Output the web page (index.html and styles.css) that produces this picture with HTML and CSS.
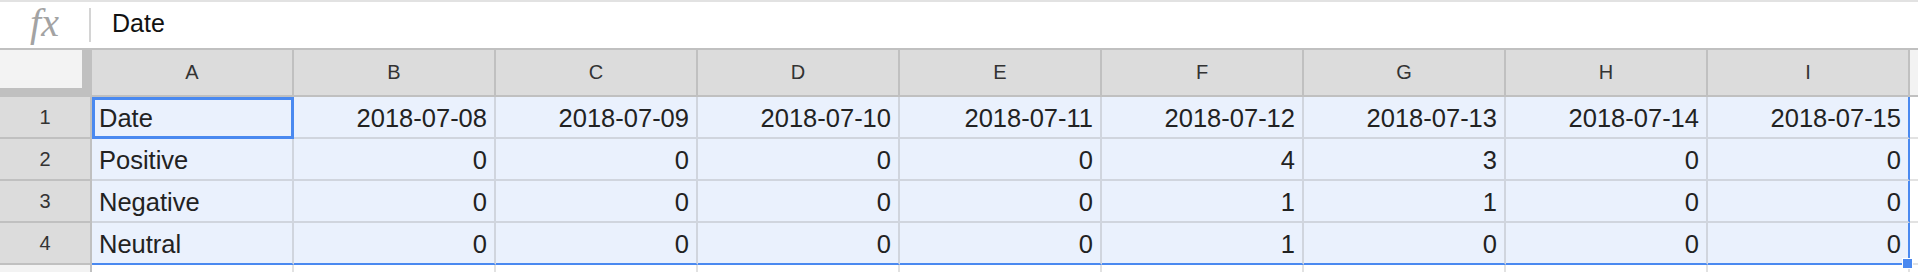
FILE: index.html
```html
<!DOCTYPE html>
<html lang="en">
  <head>
    <meta charset="UTF-8" />
    <title>Sheet</title>
    <link rel="stylesheet" href="styles.css">
  </head>
  <body>
    <div class="formula-bar">
      <span class="fx">fx</span>
      <span class="divider"></span>
      <span class="formula">Date</span>
    </div>

    <div class="sheet">
      <div class="corner"><span class="corner-box"></span></div>
      <div class="col-head">A</div>
      <div class="col-head">B</div>
      <div class="col-head">C</div>
      <div class="col-head">D</div>
      <div class="col-head">E</div>
      <div class="col-head">F</div>
      <div class="col-head">G</div>
      <div class="col-head">H</div>
      <div class="col-head">I</div>
      <div class="head-filler"></div>

      <div class="row-head">1</div>
      <div class="cell active">Date</div>
      <div class="cell num">2018-07-08</div>
      <div class="cell num">2018-07-09</div>
      <div class="cell num">2018-07-10</div>
      <div class="cell num">2018-07-11</div>
      <div class="cell num">2018-07-12</div>
      <div class="cell num">2018-07-13</div>
      <div class="cell num">2018-07-14</div>
      <div class="cell num last-col">2018-07-15</div>
      <div class="filler"></div>

      <div class="row-head">2</div>
      <div class="cell">Positive</div>
      <div class="cell num">0</div>
      <div class="cell num">0</div>
      <div class="cell num">0</div>
      <div class="cell num">0</div>
      <div class="cell num">4</div>
      <div class="cell num">3</div>
      <div class="cell num">0</div>
      <div class="cell num last-col">0</div>
      <div class="filler"></div>

      <div class="row-head">3</div>
      <div class="cell">Negative</div>
      <div class="cell num">0</div>
      <div class="cell num">0</div>
      <div class="cell num">0</div>
      <div class="cell num">0</div>
      <div class="cell num">1</div>
      <div class="cell num">1</div>
      <div class="cell num">0</div>
      <div class="cell num last-col">0</div>
      <div class="filler"></div>

      <div class="row-head">4</div>
      <div class="cell last-row">Neutral</div>
      <div class="cell num last-row">0</div>
      <div class="cell num last-row">0</div>
      <div class="cell num last-row">0</div>
      <div class="cell num last-row">0</div>
      <div class="cell num last-row">1</div>
      <div class="cell num last-row">0</div>
      <div class="cell num last-row">0</div>
      <div class="cell num last-row last-col">0<span class="fill-handle"></span></div>
      <div class="filler"></div>

      <div class="row-head empty"></div>
      <div class="blank"></div>
      <div class="blank"></div>
      <div class="blank"></div>
      <div class="blank"></div>
      <div class="blank"></div>
      <div class="blank"></div>
      <div class="blank"></div>
      <div class="blank"></div>
      <div class="blank"></div>
      <div class="blank-filler"></div>
    </div>
  </body>
</html>
```

FILE: styles.css
```css
*,
*::before,
*::after {
  box-sizing: border-box;
  padding: 0;
  margin: 0;
}
body {
  width: 1918px;
  height: 272px;
  overflow: hidden;
  background: #fff;
  font-family: "Liberation Sans", Arial, sans-serif;
  color: #222;
}
.formula-bar {
  height: 50px;
  display: flex;
  align-items: center;
  border-top: 2px solid #e2e2e2;
  border-bottom: 2px solid #c0c0c0;
}
.fx {
  width: 89px;
  padding-bottom: 4px;
  text-align: center;
  font-family: "Liberation Serif", serif;
  font-style: italic;
  font-size: 40px;
  line-height: 40px;
  color: #a3a3a3;
}
.divider {
  width: 2px;
  height: 34px;
  background: #d4d4d4;
}
.formula {
  margin-left: 21px;
  padding-bottom: 3px;
  font-size: 25px;
  color: #111;
}
.sheet {
  display: grid;
  grid-template-columns: 92px repeat(9, 202px) 8px;
  grid-template-rows: 47px repeat(4, 42px) 7px;
}
.corner {
  background: #c0c0c0;
}
.corner-box {
  display: block;
  width: 82px;
  height: 38px;
  background: #f3f3f3;
}
.col-head {
  display: flex;
  align-items: center;
  justify-content: center;
  background: #dcdcdc;
  border-right: 2px solid #c0c0c0;
  border-bottom: 2px solid #c0c0c0;
  font-size: 20px;
  color: #333;
}
.head-filler {
  background: #f3f3f3;
  border-bottom: 2px solid #c0c0c0;
}
.row-head {
  display: flex;
  align-items: center;
  justify-content: center;
  background: #dcdcdc;
  border-right: 2px solid #c0c0c0;
  border-bottom: 2px solid #c0c0c0;
  font-size: 20px;
  color: #333;
}
.row-head.empty {
  background: #f3f3f3;
  border-bottom: none;
}
.cell {
  position: relative;
  display: flex;
  align-items: center;
  padding: 2px 7px 0;
  background: #eaf1fd;
  border-right: 2px solid #d0d5de;
  border-bottom: 2px solid #d0d5de;
  font-size: 25.5px;
  white-space: nowrap;
}
.num {
  justify-content: flex-end;
}
.active {
  outline: 3px solid #4a89f0;
  outline-offset: -3px;
}
.last-row {
  border-bottom-color: #4a89f0;
}
.last-col {
  border-right-color: #4a89f0;
}
.fill-handle {
  position: absolute;
  right: -5px;
  bottom: -6px;
  width: 11px;
  height: 11px;
  background: #4a89f0;
  border: 1px solid #fff;
}
.filler {
  border-bottom: 2px solid #e2e2e2;
}
.blank {
  border-right: 2px solid #e2e2e2;
}
```
